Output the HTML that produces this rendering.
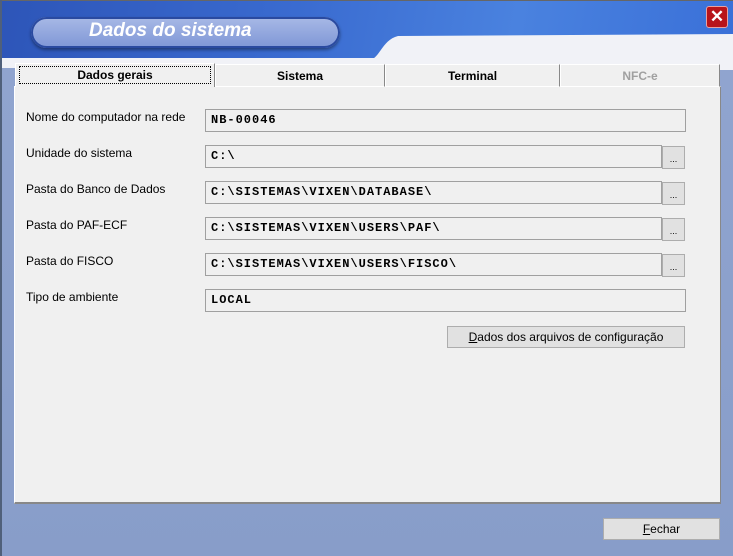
<!DOCTYPE html>
<html><head><style>
*{margin:0;padding:0;box-sizing:border-box}
body{width:733px;height:556px;overflow:hidden;font-family:"Liberation Sans",sans-serif;font-size:12px;position:relative;background:#8ea1cb}
#win{position:absolute;left:0;top:0;width:733px;height:556px;background:linear-gradient(#91a5d0,#889dc9)}
#edge{position:absolute;left:0;top:0;width:2px;height:556px;background:#50607a}
#hdr{position:absolute;left:0;top:0;width:733px;height:60px;background:linear-gradient(100deg,#2d55b8 0%,#3a6bd0 40%,#4a82df 70%,#3a70d8 100%);border-top:1px solid #666}
#light2{position:absolute;left:0;top:58px;width:733px;height:10px;background:#f1f2f7}
#pill{position:absolute;left:31px;top:17px;width:309px;height:31px;border-radius:16px;background:linear-gradient(#a8b9e6,#7e96d6);box-shadow:0 0 0 2px #2a4aa0 inset,0 2px 3px rgba(0,0,0,.4)}
#pill span{position:absolute;left:58px;top:3px;font-style:italic;font-weight:bold;font-size:19px;color:#fff;white-space:nowrap}
#close{position:absolute;left:706px;top:6px;width:22px;height:22px;background:#b8141a;border:1px solid #e8a0a0;border-radius:3px;color:#fff;font-weight:bold;font-size:17px;text-align:center;line-height:20px}
#panel{position:absolute;left:14px;top:86px;width:707px;height:418px;background:#f0f0f0;border:1px solid #fff;border-right:1px solid #888;border-bottom:2px solid #888}
.tab{position:absolute;top:64px;height:23px;background:#f0f0f0;border:1px solid #fff;border-right:1px solid #888;text-align:center;font-weight:bold;line-height:22px;font-size:12px}
.lbl{position:absolute;left:26px;font-size:12px;color:#000}
.fld{position:absolute;left:205px;height:23px;border:1px solid #a0a0a0;background:#f0f0f0;font-family:"Liberation Mono",monospace;font-weight:bold;font-size:12px;padding-left:5px;line-height:21px;letter-spacing:1px}
.br{position:absolute;left:662px;width:23px;height:23px;border:1px solid #adadad;background:#e1e1e1;font-size:9px;text-align:center;line-height:24px}
.btn{position:absolute;border:1px solid #adadad;background:#e1e1e1;text-align:center;font-size:12px}
</style></head><body>
<div id="win">
<div id="hdr"></div>
<div id="light2"></div>
<svg style="position:absolute;left:0;top:0" width="733" height="70"><path d="M370 60 C380 58 382 40 398 36 L733 34 L733 70 L370 70 Z" fill="#f1f2f7"/></svg>
<div id="pill"><span>Dados do sistema</span></div>
<div id="close">✕</div>
<div id="panel"></div>
<div class="tab" style="left:15px;width:200px;top:63px;height:24px;border-bottom:none"><span style="border:1px dotted #000;display:block;margin:2px 3px;line-height:16px">Dados gerais</span></div>
<div class="tab" style="left:215px;width:170px">Sistema</div>
<div class="tab" style="left:385px;width:175px">Terminal</div>
<div class="tab" style="left:560px;width:160px;color:#a0a0a0">NFC-e</div>
<div class="lbl" style="top:110px">Nome do computador na rede</div>
<div class="fld" style="top:109px;width:481px">NB-00046</div>
<div class="lbl" style="top:146px">Unidade do sistema</div>
<div class="fld" style="top:145px;width:457px">C:\</div><div class="br" style="top:146px">...</div>
<div class="lbl" style="top:182px">Pasta do Banco de Dados</div>
<div class="fld" style="top:181px;width:457px">C:\SISTEMAS\VIXEN\DATABASE\</div><div class="br" style="top:182px">...</div>
<div class="lbl" style="top:218px">Pasta do PAF-ECF</div>
<div class="fld" style="top:217px;width:457px">C:\SISTEMAS\VIXEN\USERS\PAF\</div><div class="br" style="top:218px">...</div>
<div class="lbl" style="top:254px">Pasta do FISCO</div>
<div class="fld" style="top:253px;width:457px">C:\SISTEMAS\VIXEN\USERS\FISCO\</div><div class="br" style="top:254px">...</div>
<div class="lbl" style="top:290px">Tipo de ambiente</div>
<div class="fld" style="top:289px;width:481px">LOCAL</div>
<div class="btn" style="left:447px;top:326px;width:238px;height:22px;line-height:20px"><u>D</u>ados dos arquivos de configuração</div>
<div class="btn" style="left:603px;top:518px;width:117px;height:22px;line-height:20px"><u>F</u>echar</div>
<div id="edge"></div>
</div>
</body></html>
